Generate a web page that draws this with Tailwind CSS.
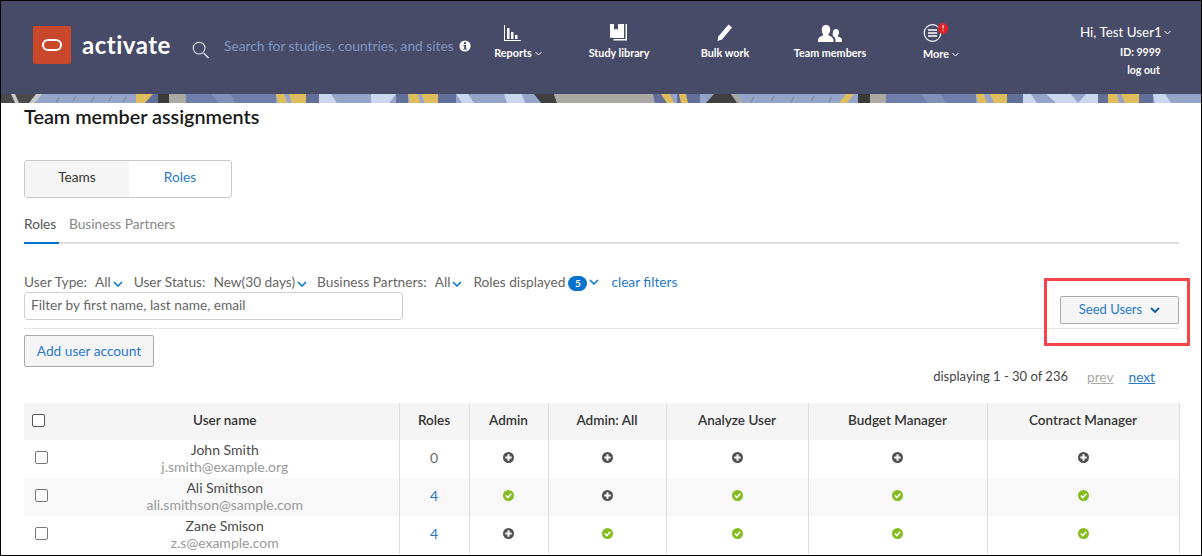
<!DOCTYPE html>
<html lang="en">
<head>
  <meta charset="UTF-8" />
  <title>Team member assignments</title>
  <script src="https://cdn.jsdelivr.net/npm/@tailwindcss/browser@4"></script>
</head>
<body class="bg-white font-['Lato',sans-serif]">
<div class="relative w-[1202px] h-[556px] overflow-hidden border border-black flex flex-col">

  <!-- Header -->
  <header class="h-[93px] shrink-0 bg-[#474b68] flex items-start text-white">
    <div class="ml-[32px] mt-[25px] w-[38px] h-[38px] rounded-[2px] bg-[#c9472b] flex items-center justify-center">
      <span class="block w-[20px] h-[12px] rounded-[6px] border-2 border-white"></span>
    </div>
    <span class="ml-[11px] mt-[26px] w-[110px] font-bold text-[24px] leading-[36px] tracking-[0.5px]">activate</span>
    <svg class="mt-[40px] w-[18px] h-[18px]" viewBox="0 0 19 19" fill="none" stroke="#e8eaf0"><circle cx="7.500" cy="7.500" r="6.200" stroke-width="1.100"/><path d="M12.500 13 17.500 18" stroke-width="1.400"/></svg>
    <span class="ml-[14px] mt-[34px] w-[235px] text-[#7f96c0] text-[13.750px] leading-[22px] whitespace-nowrap">Search for studies, countries, and sites</span>
    <svg class="mt-[39px] w-[12px] h-[12px]" viewBox="0 0 12 12"><circle cx="6" cy="6" r="5.600" fill="#fff"/><path d="M5 2.300h2v1.600H5zM4.500 5h2.600v3.400h.7v1.200H4.400V8.400h.8V6.200h-.7z" fill="#474b68"/></svg>

    <nav class="flex ml-[-3px] text-[10.800px] font-bold">
      <a class="w-[100px] flex flex-col items-center">
        <svg class="mt-[23px] ml-[-12px] w-[18px] h-[18px]" viewBox="0 0 18 18" fill="#fff"><path d="M1 1h1v15h16v1H1z"/><path d="M4 4h2.500v11H4zM8 8h2.500v7H8zM12 11h2.500v4H12z"/></svg>
        <span class="mt-[2px] leading-[18px] flex items-center gap-[3px]">Reports <svg class="w-[7px] h-[5px]" viewBox="0 0 7 5" fill="none" stroke="#fff"><path d="M.5 1 3.500 4l3-3"/></svg></span>
      </a>
      <a class="w-[102px] flex flex-col items-center">
        <svg class="mt-[22px] w-[19px] h-[20px]" viewBox="0 0 19 20" fill="#fff"><path d="M0 1h4v6l2-1.500L8 7V1h6v14H3a3 3 0 0 0-3 0z"/><path d="M15.500 1H17v16.500H3.500V16H15.500z"/></svg>
        <span class="mt-[1px] leading-[18px]">Study library</span>
      </a>
      <a class="w-[110px] flex flex-col items-center">
        <svg class="mt-[22px] w-[18px] h-[19px]" viewBox="0 0 18 19" fill="#fff"><path d="M12.500 1.500 16 4.500 6 16.500 1.500 18 2.500 13.300z"/></svg>
        <span class="mt-[2px] leading-[18px]">Bulk work</span>
      </a>
      <a class="w-[100px] flex flex-col items-center">
        <svg class="mt-[24px] w-[24px] h-[18px]" viewBox="0 0 24 18" fill="#fff"><path d="M8 0c2.800 0 4.200 2 4.200 4.500 0 2-.8 3.500-1.700 4.500v1.500c2 .8 5 1.700 5 5V17H0v-1.500c0-3.300 3-4.200 5-5V9C4.200 8 3.800 6.500 3.800 4.500 3.800 2 5.200 0 8 0z"/><path d="M18 4c2 0 3 1.500 3 3.200 0 1.500-.5 2.500-1.200 3.300v1c1.500.5 4.200 1.200 4.200 3.500V17h-6.500v-2c0-1.800-1.200-3.200-2.500-4-.6-.8-.4-2-.1-3.500C15 5.500 16 4 18 4z"/></svg>
        <span class="mt-[1px] leading-[18px]">Team members</span>
      </a>
      <a class="w-[122px] flex flex-col items-center">
        <span class="relative mt-[22px] w-[20px] h-[20px] ml-[-16px]">
          <svg class="w-[20px] h-[20px]" viewBox="0 0 20 20" fill="none" stroke="#fff"><circle cx="9.500" cy="10" r="8.300" stroke-width="1.200"/><path d="M5 7h9M5 10h9M5 13h9" stroke-width="1.400"/></svg>
          <span class="absolute top-[0px] right-[-5px] w-[10px] h-[11px] rounded-full bg-[#e3202a] text-[8px] leading-[11px] text-center font-bold">!</span>
        </span>
        <span class="mt-[2px] leading-[18px] flex items-center gap-[3px]">More <svg class="w-[7px] h-[5px]" viewBox="0 0 7 5" fill="none" stroke="#fff"><path d="M.5 1 3.500 4l3-3"/></svg></span>
      </a>
    </nav>

    <div class="ml-[78px] flex flex-col items-end">
      <span class="mt-[21px] leading-[20px] text-[13.400px] flex items-center gap-[2px] whitespace-nowrap">Hi, Test User1 <svg class="w-[7px] h-[5px]" viewBox="0 0 7 5" fill="none" stroke="#fff"><path d="M.5 1 3.500 4l3-3"/></svg></span>
      <span class="mt-[1px] mr-[10px] text-[10.500px] font-bold leading-[18px]">ID: 9999</span>
      <span class="mr-[11px] text-[10.500px] font-bold leading-[18px]">log out</span>
    </div>
  </header>

  <!-- Decorative strip -->
  <svg class="block shrink-0 w-[1200px] h-[9px] blur-[0.5px]" viewBox="0 0 1200 10" preserveAspectRatio="none">
    <rect width="1200" height="10" fill="#95a4c8"/>
    <path d="M0 0h35v10H0z" fill="#4a4a4a"/>
    <path d="M10 0h4l4 10h-4zM28 10l7-10h6l-7 10z" fill="#c9c9c9"/>
    <path d="M55 10l3-6M72 8l3-6M90 9l3-6M108 8l3-6M122 9l3-6M750 9l3-6M770 8l3-6M790 9l3-6M810 8l3-6M828 9l3-6" stroke="#6f7fa9" fill="none"/>
    <path d="M135 0h17l-8 10h-9z" fill="#dfbc5c"/><path d="M152 0h6v10h-14z" fill="#626f98"/>
    <path d="M157 0h11v10h-11z" fill="#3a3a3a"/><path d="M168 0h17v10h-17z" fill="#aaa9a4"/>
    <path d="M185 0h90v10h-90z" fill="#6f7fa9"/><path d="M210 0h20l4 10h-16z" fill="#8090b8"/>
    <path d="M275 0h8l3 10h-9zM288 0h17v10h-14z" fill="#dfbc5c"/><path d="M305 0h13v10h-13z" fill="#626f98"/>
    <path d="M318 0h12l6 10h-18zM370 0h25l-7 10h-18z" fill="#ccd6ee"/>
    <path d="M395 0h12v10h-12z" fill="#626f98"/><path d="M407 0h10l2 10h-10zM420 0h17v10h-13z" fill="#dfbc5c"/>
    <path d="M437 0h18v10h-18z" fill="#626f98"/><path d="M455 0h12l6 10h-12zM503 0h18l3 10h-18z" fill="#ccd6ee"/>
    <path d="M533 0h20l3 10h-16z" fill="#3f3f3f"/><path d="M553 0h99v10h-96z" fill="#a9a8a3"/>
    <path d="M652 0h8l6 10h-12zM676 0h23v10h-23z" fill="#626f98"/>
    <path d="M660 0h9l4 10h-7zM678 0h7l2 10h-7z" fill="#dfbc5c"/>
    <path d="M705 10l8-10h17l8 10z" fill="#3f3f3f"/><path d="M730 0h6l6 10h-6z" fill="#a9a8a3"/>
    <path d="M838 10l7-10h8l-7 10z" fill="#dfbc5c"/><path d="M857 0h12v10h-12z" fill="#3a3a3a"/>
    <path d="M869 0h16v10h-16z" fill="#aaa9a4"/><path d="M885 0h90v10h-90z" fill="#6f7fa9"/>
    <path d="M920 0h20l5 10h-18z" fill="#8090b8"/>
    <path d="M975 0h8l3 10h-9zM989 0h17v10h-13z" fill="#dfbc5c"/><path d="M1006 0h16v10h-16z" fill="#626f98"/>
    <path d="M1022 0h8l6 10h-14zM1045 0h25l7 10h-22zM1085 0h12v10h-20z" fill="#ccd6ee"/>
    <path d="M1097 0h10v10h-10z" fill="#626f98"/><path d="M1107 0h9l2 10h-11zM1120 0h18v10h-14z" fill="#dfbc5c"/>
    <path d="M1138 0h14v10h-14z" fill="#626f98"/><path d="M1152 0h12l6 10h-16z" fill="#ccd6ee"/>
  </svg>

  <!-- Page content -->
  <main class="flex-1 pl-[23px] pr-[22px] text-[#4a4a4a] text-[13.700px]">
    <h1 class="text-[19.800px] leading-[26px] font-semibold text-[#1a1a1a]">Team member assignments</h1>

    <div class="mt-[31px] w-[208px] h-[38px] flex border border-[#c9c9c9] rounded-[3px] overflow-hidden leading-[32px] text-center">
      <span class="w-[104px] bg-[#f5f5f5] text-[#333]">Teams</span>
      <span class="flex-1 text-[#2a79c9]">Roles</span>
    </div>

    <div class="mt-[15px] flex gap-[10px] h-[31px] border-b-2 border-[#dedede] leading-[22px]">
      <span class="h-[31px] w-[35px] border-b-2 border-[#0572ce] text-[#555]">Roles</span>
      <span class="text-[#888]">Business Partners</span>
    </div>

    <div class="flex justify-between items-start border-b border-[#e6e6e6] pb-[3px] mt-[27px]">
      <div>
        <div class="flex items-center h-[20px] mt-[1px] text-[#666] whitespace-nowrap">
          <span>User Type:</span><span class="ml-[8px]">All</span>
          <svg class="ml-[2px] mt-[4px] w-[10px] h-[6px]" viewBox="0 0 10 6" fill="none" stroke="#0572ce" stroke-width="1.500"><path d="M1 1l4 4 4-4"/></svg>
          <span class="ml-[11px]">User Status:</span><span class="ml-[8px]">New(30 days)</span>
          <svg class="ml-[2px] mt-[4px] w-[10px] h-[6px]" viewBox="0 0 10 6" fill="none" stroke="#0572ce" stroke-width="1.500"><path d="M1 1l4 4 4-4"/></svg>
          <span class="ml-[10px]">Business Partners:</span><span class="ml-[8px]">All</span>
          <svg class="ml-[2px] mt-[4px] w-[10px] h-[6px]" viewBox="0 0 10 6" fill="none" stroke="#0572ce" stroke-width="1.500"><path d="M1 1l4 4 4-4"/></svg>
          <span class="ml-[11px]">Roles displayed</span>
          <span class="ml-[3px] mt-[3px] w-[19px] h-[15px] rounded-full bg-[#0572ce] text-white text-[10px] font-bold leading-[15px] text-center">5</span>
          <svg class="ml-[2px] w-[10px] h-[6px]" viewBox="0 0 10 6" fill="none" stroke="#0572ce" stroke-width="1.500"><path d="M1 1l4 4 4-4"/></svg>
          <a class="ml-[12px] text-[#2a79c9]">clear filters</a>
        </div>
        <div class="w-[379px] h-[28px] border border-[#cfcfcf] rounded-[3px] px-[6px] leading-[24px] text-[#666]">Filter by first name, last name, email</div>
        <div class="h-[5px]"></div>
      </div>
      <button class="mt-[25px] w-[119px] h-[28px] border border-[#a9a9a9] rounded-[2px] bg-[#f5f5f5] text-[#2a79c9] text-[13px] flex items-center justify-center gap-[8px]">Seed Users <svg class="w-[10px] h-[7px]" viewBox="0 0 10 7" fill="none" stroke="#0f5c9e" stroke-width="1.800"><path d="M1 1l4 4 4-4"/></svg></button>
    </div>

    <button class="block mt-[6px] w-[130px] h-[32px] border border-[#a9a9a9] rounded-[2px] bg-[#f5f5f5] text-[#2a79c9] text-[13.700px]">Add user account</button>

    <div class="flex justify-end items-center h-[20px] pr-[24px] text-[#444]">
      <span class="text-[13px]">displaying 1 - 30 of 236</span>
      <span class="ml-[19px] underline text-[#aaa]">prev</span>
      <a class="ml-[15px] underline text-[#2a79c9]">next</a>
    </div>

    <table class="mt-[16px] w-[1155px] table-fixed border-collapse text-center text-[14px] [&_td]:pb-[3px] [&_th]:pb-[3px]">
      <colgroup>
        <col class="w-[27px]"/><col class="w-[348px]"/><col class="w-[70px]"/><col class="w-[79px]"/><col class="w-[118px]"/><col class="w-[142px]"/><col class="w-[179px]"/><col class="w-[192px]"/>
      </colgroup>
      <thead>
        <tr class="h-[37px] bg-[#f5f5f5] text-[#333] text-[13.500px]">
          <th><span class="block ml-[8px] w-[13px] h-[13px] rounded-[2px] border border-[#555] bg-white"></span></th>
          <th class="font-semibold border-r border-[#dcdcdc]">User name</th>
          <th class="font-semibold border-r border-[#dcdcdc]">Roles</th>
          <th class="font-semibold border-r border-[#dcdcdc]">Admin</th>
          <th class="font-semibold border-r border-[#dcdcdc]">Admin: All</th>
          <th class="font-semibold border-r border-[#dcdcdc]">Analyze User</th>
          <th class="font-semibold border-r border-[#dcdcdc]">Budget Manager</th>
          <th class="font-semibold border-r border-[#dcdcdc]">Contract Manager</th>
        </tr>
      </thead>
      <tbody>
        <tr class="h-[38px]">
          <td><span class="block ml-[11px] w-[13px] h-[13px] rounded-[2px] border border-[#777] bg-white"></span></td>
          <td class="border-r border-[#dcdcdc] leading-[17px]"><div>John Smith</div><div class="text-[#999]">j.smith@example.org</div></td>
          <td class="border-r border-[#dcdcdc] text-[#666]">0</td>
          <td class="border-r border-[#dcdcdc]"><svg class="mx-auto w-[11px] h-[11px]" viewBox="0 0 11 11"><circle cx="5.500" cy="5.500" r="5.500" fill="#505050"/><path d="M4.500 2.300h2v2.200h2.200v2H6.500v2.200h-2V6.500H2.300v-2h2.200z" fill="#fff"/></svg></td>
          <td class="border-r border-[#dcdcdc]"><svg class="mx-auto w-[11px] h-[11px]" viewBox="0 0 11 11"><circle cx="5.500" cy="5.500" r="5.500" fill="#505050"/><path d="M4.500 2.300h2v2.200h2.200v2H6.500v2.200h-2V6.500H2.300v-2h2.200z" fill="#fff"/></svg></td>
          <td class="border-r border-[#dcdcdc]"><svg class="mx-auto w-[11px] h-[11px]" viewBox="0 0 11 11"><circle cx="5.500" cy="5.500" r="5.500" fill="#505050"/><path d="M4.500 2.300h2v2.200h2.200v2H6.500v2.200h-2V6.500H2.300v-2h2.200z" fill="#fff"/></svg></td>
          <td class="border-r border-[#dcdcdc]"><svg class="mx-auto w-[11px] h-[11px]" viewBox="0 0 11 11"><circle cx="5.500" cy="5.500" r="5.500" fill="#505050"/><path d="M4.500 2.300h2v2.200h2.200v2H6.500v2.200h-2V6.500H2.300v-2h2.200z" fill="#fff"/></svg></td>
          <td class="border-r border-[#dcdcdc]"><svg class="mx-auto w-[11px] h-[11px]" viewBox="0 0 11 11"><circle cx="5.500" cy="5.500" r="5.500" fill="#505050"/><path d="M4.500 2.300h2v2.200h2.200v2H6.500v2.200h-2V6.500H2.300v-2h2.200z" fill="#fff"/></svg></td>
        </tr>
        <tr class="h-[38px] bg-[#f8f8f8]">
          <td><span class="block ml-[11px] w-[13px] h-[13px] rounded-[2px] border border-[#777] bg-white"></span></td>
          <td class="border-r border-[#dcdcdc] leading-[17px]"><div>Ali Smithson</div><div class="text-[#999]">ali.smithson@sample.com</div></td>
          <td class="border-r border-[#dcdcdc] text-[#2a79c9]">4</td>
          <td class="border-r border-[#dcdcdc]"><svg class="mx-auto w-[11px] h-[11px]" viewBox="0 0 11 11"><circle cx="5.500" cy="5.500" r="5.500" fill="#85bc20"/><path d="M2.800 5.500 4.800 7.500 8.200 3.800" fill="none" stroke="#fff" stroke-width="1.600"/></svg></td>
          <td class="border-r border-[#dcdcdc]"><svg class="mx-auto w-[11px] h-[11px]" viewBox="0 0 11 11"><circle cx="5.500" cy="5.500" r="5.500" fill="#505050"/><path d="M4.500 2.300h2v2.200h2.200v2H6.500v2.200h-2V6.500H2.300v-2h2.200z" fill="#fff"/></svg></td>
          <td class="border-r border-[#dcdcdc]"><svg class="mx-auto w-[11px] h-[11px]" viewBox="0 0 11 11"><circle cx="5.500" cy="5.500" r="5.500" fill="#85bc20"/><path d="M2.800 5.500 4.800 7.500 8.200 3.800" fill="none" stroke="#fff" stroke-width="1.600"/></svg></td>
          <td class="border-r border-[#dcdcdc]"><svg class="mx-auto w-[11px] h-[11px]" viewBox="0 0 11 11"><circle cx="5.500" cy="5.500" r="5.500" fill="#85bc20"/><path d="M2.800 5.500 4.800 7.500 8.200 3.800" fill="none" stroke="#fff" stroke-width="1.600"/></svg></td>
          <td class="border-r border-[#dcdcdc]"><svg class="mx-auto w-[11px] h-[11px]" viewBox="0 0 11 11"><circle cx="5.500" cy="5.500" r="5.500" fill="#85bc20"/><path d="M2.800 5.500 4.800 7.500 8.200 3.800" fill="none" stroke="#fff" stroke-width="1.600"/></svg></td>
        </tr>
        <tr class="h-[38px]">
          <td><span class="block ml-[11px] w-[13px] h-[13px] rounded-[2px] border border-[#777] bg-white"></span></td>
          <td class="border-r border-[#dcdcdc] leading-[17px]"><div>Zane Smison</div><div class="text-[#999]">z.s@example.com</div></td>
          <td class="border-r border-[#dcdcdc] text-[#2a79c9]">4</td>
          <td class="border-r border-[#dcdcdc]"><svg class="mx-auto w-[11px] h-[11px]" viewBox="0 0 11 11"><circle cx="5.500" cy="5.500" r="5.500" fill="#505050"/><path d="M4.500 2.300h2v2.200h2.200v2H6.500v2.200h-2V6.500H2.300v-2h2.200z" fill="#fff"/></svg></td>
          <td class="border-r border-[#dcdcdc]"><svg class="mx-auto w-[11px] h-[11px]" viewBox="0 0 11 11"><circle cx="5.500" cy="5.500" r="5.500" fill="#85bc20"/><path d="M2.800 5.500 4.800 7.500 8.200 3.800" fill="none" stroke="#fff" stroke-width="1.600"/></svg></td>
          <td class="border-r border-[#dcdcdc]"><svg class="mx-auto w-[11px] h-[11px]" viewBox="0 0 11 11"><circle cx="5.500" cy="5.500" r="5.500" fill="#85bc20"/><path d="M2.800 5.500 4.800 7.500 8.200 3.800" fill="none" stroke="#fff" stroke-width="1.600"/></svg></td>
          <td class="border-r border-[#dcdcdc]"><svg class="mx-auto w-[11px] h-[11px]" viewBox="0 0 11 11"><circle cx="5.500" cy="5.500" r="5.500" fill="#85bc20"/><path d="M2.800 5.500 4.800 7.500 8.200 3.800" fill="none" stroke="#fff" stroke-width="1.600"/></svg></td>
          <td class="border-r border-[#dcdcdc]"><svg class="mx-auto w-[11px] h-[11px]" viewBox="0 0 11 11"><circle cx="5.500" cy="5.500" r="5.500" fill="#85bc20"/><path d="M2.800 5.500 4.800 7.500 8.200 3.800" fill="none" stroke="#fff" stroke-width="1.600"/></svg></td>
        </tr>
      </tbody>
    </table>
  </main>

  <!-- Red annotation box over the Seed Users button -->
  <div class="absolute left-[1043px] top-[277px] w-[146px] h-[68px] border-[3px] border-[#f5444a]"></div>
</div>
</body>
</html>
